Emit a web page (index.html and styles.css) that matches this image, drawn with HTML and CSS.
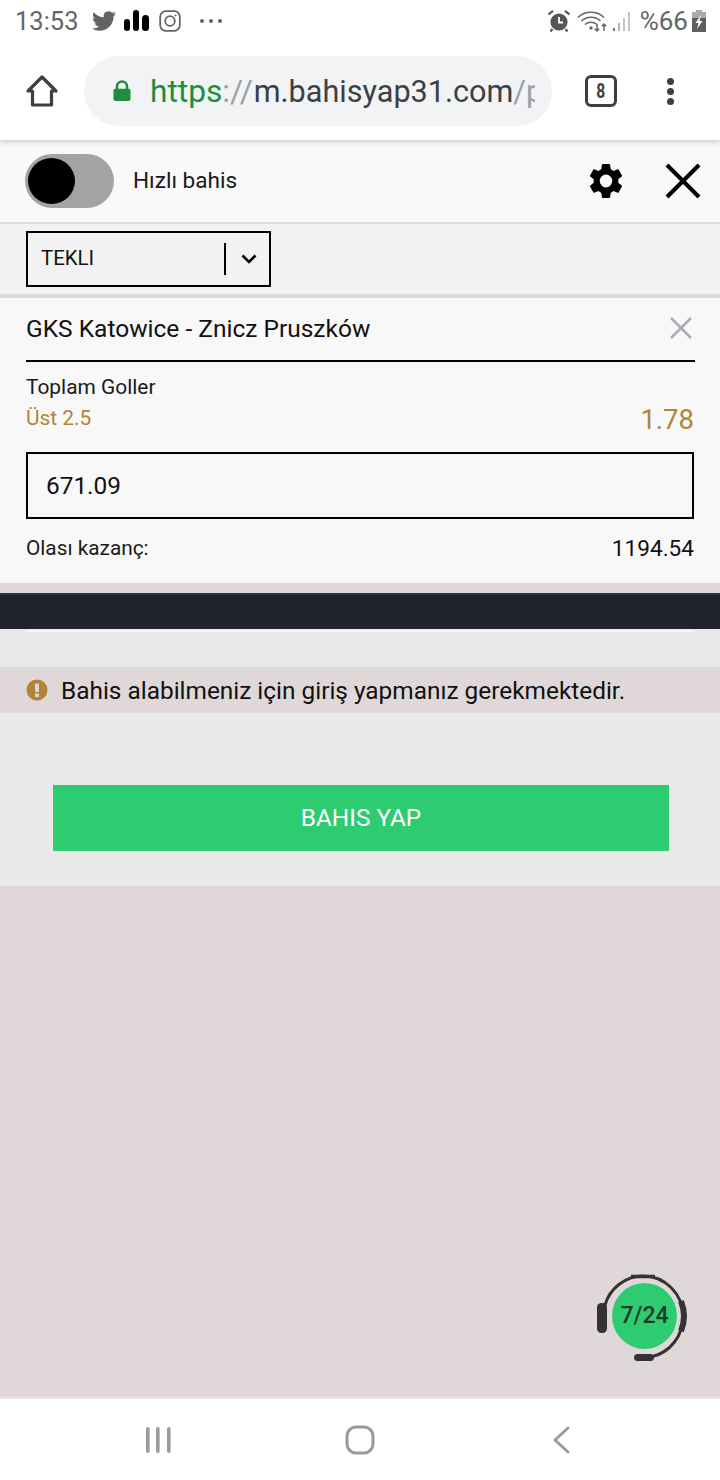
FILE: index.html
```html
<!DOCTYPE html>
<html lang="tr">
<head>
    <meta charset="UTF-8">
    <meta name="viewport" content="width=device-width, initial-scale=1.0">
    <title>Bahis</title>
    <link rel="stylesheet" href="styles.css">
</head>
<body>

<!-- Phone status bar -->
<div class="status-bar">
    <div class="status-left">
        <span class="clock">13:53</span>
        <svg class="ic-twitter" width="24" height="24" viewBox="0 0 24 24"><path fill="#636363" d="M23.95 4.57a10 10 0 0 1-2.82.77 4.96 4.96 0 0 0 2.16-2.72c-.95.56-2 .96-3.13 1.19a4.92 4.92 0 0 0-8.38 4.48C7.69 8.1 4.07 6.13 1.64 3.16a4.82 4.82 0 0 0-.67 2.48c0 1.71.87 3.21 2.19 4.1a4.9 4.9 0 0 1-2.23-.62v.06a4.92 4.92 0 0 0 3.95 4.83 5 5 0 0 1-2.21.08 4.94 4.94 0 0 0 4.6 3.42A9.87 9.87 0 0 1 0 19.54a13.99 13.99 0 0 0 7.56 2.21c9.05 0 14-7.5 14-13.98 0-.21 0-.42-.02-.63a9.94 9.94 0 0 0 2.41-2.57z"/></svg>
        <svg class="ic-bars" width="26" height="22" viewBox="0 0 26 22"><rect x="0" y="9" width="6" height="12" rx="3"/><rect x="9" y="0" width="6" height="21" rx="3"/><rect x="18" y="5" width="7" height="16" rx="3.5"/></svg>
        <svg class="ic-insta" width="22" height="22" viewBox="0 0 22 22" fill="none" stroke="#636363" stroke-width="1.8"><rect x="1.2" y="1.2" width="19.6" height="19.6" rx="5.5"/><circle cx="11" cy="11" r="4.8"/><circle cx="16.6" cy="5.4" r="1" fill="#636363" stroke="none"/></svg>
        <span class="dots-h"><i></i><i></i><i></i></span>
    </div>
    <div class="status-right">
        <svg class="ic-alarm" width="24" height="24" viewBox="0 0 24 24"><circle cx="12" cy="13" r="8.6" fill="#555"/><path d="M12 8v5.5h4" fill="none" stroke="#fff" stroke-width="1.8"/><path d="M1.5 5.5 6 1.8M22.5 5.5 18 1.8M5.5 20l-2 2.5M18.5 20l2 2.5" stroke="#555" stroke-width="2.2" fill="none"/></svg>
        <svg width="32" height="24" viewBox="0 0 32 24" fill="none" stroke="#666" stroke-width="1.6"><path d="M1 8.5C8 1.5 20 1.5 27 8.5M4.5 12C9.5 7 18.5 7 23.5 12M8 15.5c3.300-3 8.700-3 12 0"/><circle cx="14" cy="19" r="1.700" fill="#666" stroke="none"/><path d="M20 15v7M17.800 19.800 20 22l2.200-2.200M27 22v-7M24.800 17.200 27 15l2.200 2.200" stroke-width="1.500"/></svg>
        <svg width="20" height="22" viewBox="0 0 20 22"><rect x="0" y="18" width="2" height="3" fill="#777"/><rect x="5" y="13" width="2" height="8" fill="#b5b5b5"/><rect x="10" y="8" width="2" height="13" fill="#c4c4c4"/><rect x="15" y="2" width="2" height="19" fill="#c4c4c4"/></svg>
        <span class="percent">%66</span>
        <svg width="14" height="22" viewBox="0 0 14 22"><rect x="4" y="0" width="6" height="3" fill="#aaa"/><rect x="0" y="2" width="14" height="7" fill="#aaa"/><rect x="0" y="8" width="14" height="14" fill="#5f5f5f"/><path d="M9 5 3.500 13h3l-1.500 6 5.500-8H7.500z" fill="#fff"/></svg>
    </div>
</div>

<!-- Browser toolbar -->
<div class="toolbar">
    <svg class="ic-home" width="34" height="34" viewBox="0 0 34 34" fill="none" stroke="#3c4043" stroke-width="3.2" stroke-linejoin="round"><path d="M3 17 17 3l14 14h-4.500v14h-19V17z"/></svg>
    <div class="url-box">
        <svg class="ic-lock" width="18" height="22" viewBox="0 0 20 24"><path fill="#1e8e3e" d="M3 9.500V7a7 7 0 0 1 14 0v2.500h.5a2 2 0 0 1 2 2V21a2 2 0 0 1-2 2h-15a2 2 0 0 1-2-2v-9.500a2 2 0 0 1 2-2zM5.800 9.500h8.400V7a4.200 4.200 0 0 0-8.400 0z"/></svg>
        <div class="url-text"><span class="u-green">https</span><span class="u-grey u-slash">://</span>m.bahisyap31.com<span class="u-grey">/p</span></div>
    </div>
    <div class="tab-count"><span>8</span></div>
    <span class="dots-v"><i></i><i></i><i></i></span>
</div>

<!-- Bet slip head -->
<div class="slip-head">
    <div class="toggle"><div class="knob"></div></div>
    <span class="toggle-label">Hızlı bahis</span>
    <svg class="ic-gear" width="32" height="34" viewBox="2.3 2 19.4 20" preserveAspectRatio="none"><path fill-rule="evenodd" d="M19.430 12.980c.04-.32.07-.64.07-.98s-.03-.66-.07-.98l2.110-1.650c.19-.15.24-.42.12-.64l-2-3.460c-.12-.22-.39-.3-.61-.22l-2.490 1c-.52-.4-1.080-.73-1.690-.98l-.38-2.650A.49.49 0 0 0 14 2h-4c-.25 0-.46.18-.49.42l-.38 2.650c-.61.25-1.170.59-1.690.98l-2.490-1c-.23-.09-.49 0-.61.22l-2 3.460c-.13.22-.07.49.12.64l2.110 1.650c-.04.32-.07.65-.07.98s.03.66.07.98l-2.110 1.650c-.19.15-.24.42-.12.64l2 3.460c.12.22.39.3.61.22l2.490-1c.52.4 1.080.73 1.690.98l.38 2.650c.03.24.24.42.49.42h4c.25 0 .46-.18.49-.42l.38-2.650c.61-.25 1.170-.59 1.690-.98l2.490 1c.23.09.49 0 .61-.22l2-3.460c.12-.22.07-.49-.12-.64zM12 15.800a3.800 3.800 0 1 1 0-7.600 3.800 3.800 0 0 1 0 7.600z"/></svg>
    <svg class="ic-close" width="36" height="36" viewBox="0 0 36 36" stroke="#000" stroke-width="4"><path d="M2 2l32 32M34 2 2 34"/></svg>
</div>

<!-- Bet type select -->
<div class="type-row">
    <div class="type-select">
        <span class="type-name">TEKLI</span>
        <span class="type-sep"></span>
        <svg class="ic-chev" width="16" height="10" viewBox="0 0 16 10" fill="none" stroke="#000" stroke-width="2.600"><path d="M1.500 1.500 8 8l6.500-6.500"/></svg>
    </div>
</div>

<!-- Selected bet -->
<div class="bet-card">
    <div class="bet-title">
        <span>GKS Katowice - Znicz Pruszków</span>
        <svg width="22" height="22" viewBox="0 0 22 22" stroke="#a9adb3" stroke-width="2.600"><path d="M1 1l20 20M21 1 1 21"/></svg>
    </div>
    <div class="market">Toplam Goller</div>
    <div class="pick-row">
        <span class="pick">Üst 2.5</span>
        <span class="odds">1.78</span>
    </div>
    <input class="stake" type="text" value="671.09">
    <div class="win-row">
        <span class="win-label">Olası kazanç:</span>
        <span class="win-value">1194.54</span>
    </div>
</div>

<div class="gap-band"></div>
<div class="dark-band"></div>

<div class="summary">
    <div class="summary-line"></div>
    <div class="warning">
        <svg width="22" height="22" viewBox="0 0 22 22"><circle cx="11" cy="11" r="10.500" fill="#b08538"/><rect x="9" y="4.500" width="4" height="8.500" rx="1" fill="#e0d8d8"/><rect x="9" y="14.500" width="4" height="3.500" fill="#e0d8d8"/></svg>
        <span>Bahis alabilmeniz için giriş yapmanız gerekmektedir.</span>
    </div>
    <div class="btn-wrap">
        <button class="bet-btn">BAHIS YAP</button>
    </div>
</div>

<div class="filler">
    <!-- Floating support button -->
    <div class="support">
        <svg width="96" height="92" viewBox="0 0 96 92" fill="none" stroke="#333"><path d="M10 32A40 40 0 0 1 48 3 40 40 0 0 1 88 43 41 41 0 0 1 56 84" stroke-width="3"/><path d="M36 3.500h24" stroke-width="3.500"/><path d="M86 28a40 40 0 0 1 0 30" stroke-width="6"/><rect x="2" y="30" width="10" height="30" rx="4.500" fill="#333" stroke="none"/><rect x="39" y="81" width="20" height="7" rx="3.500" fill="#333" stroke="none"/></svg>
        <div class="support-badge">7/24</div>
    </div>
</div>

<!-- Android nav bar -->
<div class="nav-bar">
    <svg width="28" height="26" viewBox="0 0 28 26" fill="#9a9a9a"><rect x="1" y="0" width="3.600" height="26" rx="1.800"/><rect x="11" y="0" width="3.600" height="26" rx="1.800"/><rect x="22" y="0" width="3.600" height="26" rx="1.800"/></svg>
    <svg width="30" height="30" viewBox="0 0 30 30" fill="none" stroke="#9a9a9a" stroke-width="3"><rect x="2" y="2" width="26" height="26" rx="9"/></svg>
    <svg width="18" height="28" viewBox="0 0 18 28" fill="none" stroke="#9a9a9a" stroke-width="3" stroke-linecap="round" stroke-linejoin="round"><path d="M16 2 3 14l13 12"/></svg>
</div>

</body>
</html>
```

FILE: styles.css
```css
* {
    box-sizing: border-box;
}
body {
    font-family: 'Roboto', sans-serif;
    background-color: #e0d8d8;
    margin: 0;
    padding: 0;
    width: 720px;
    height: 1480px;
    display: flex;
    flex-direction: column;
    overflow: hidden;
    color: #111;
}
.status-bar {
    height: 40px;
    background-color: #fff;
    display: flex;
    justify-content: space-between;
    align-items: center;
    padding: 2px 14px 0 15px;
    flex-shrink: 0;
    position: relative;
    z-index: 2;
}
.status-left, .status-right {
    display: flex;
    align-items: center;
}
.clock {
    font-size: 25.5px;
    color: #666;
    margin-right: 13px;
}
.ic-bars {
    margin-left: 8px;
}
.ic-insta {
    margin-left: 9px;
}
.dots-h {
    display: flex;
    gap: 5px;
    margin-left: 19px;
}
.dots-h i {
    width: 4px;
    height: 4px;
    border-radius: 50%;
    background-color: #666;
}
.status-right {
    gap: 4px;
}
.ic-alarm {
    margin-right: 2px;
}
.percent {
    font-size: 26px;
    color: #666;
    margin-left: 3px;
}
.toolbar {
    height: 100px;
    background-color: #fff;
    display: flex;
    align-items: center;
    padding: 2px 0 0 25px;
    flex-shrink: 0;
    position: relative;
    z-index: 1;
    box-shadow: 0 2px 5px rgba(0, 0, 0, 0.18);
}
.url-box {
    width: 468px;
    height: 70px;
    margin-left: 25px;
    background-color: #f1f3f4;
    border-radius: 35px;
    display: flex;
    align-items: center;
    padding-left: 29px;
    overflow: hidden;
}
.ic-lock {
    flex-shrink: 0;
}
.url-text {
    font-size: 30.6px;
    margin-left: 19px;
    color: #3c4043;
    width: 385px;
    overflow: hidden;
    white-space: nowrap;
}
.u-green {
    color: #1e8e3e;
    font-size: 31.7px;
}
.u-grey {
    color: #9aa0a6;
}
.u-slash {
    font-size: 31.7px;
    margin-right: 1px;
}
.tab-count {
    width: 32px;
    height: 32px;
    margin-left: 33px;
    border: 3px solid #3c4043;
    border-radius: 6px;
    font-size: 20px;
    font-weight: bold;
    color: #3c4043;
    text-align: center;
    line-height: 26px;
}
.tab-count span {
    display: inline-block;
    transform: scaleX(0.78);
}
.dots-v {
    display: flex;
    flex-direction: column;
    gap: 3px;
    margin-left: 50px;
}
.dots-v i {
    width: 7px;
    height: 7px;
    border-radius: 50%;
    background-color: #3c4043;
}
.slip-head {
    height: 84px;
    background-color: #f9f9f9;
    border-bottom: 2px solid #e0d8d8;
    display: flex;
    align-items: center;
    padding-left: 25px;
    flex-shrink: 0;
}
.toggle {
    width: 89px;
    height: 54px;
    border-radius: 27px;
    background-color: #a3a3a3;
    padding: 4px 3px;
}
.knob {
    width: 47px;
    height: 46px;
    border-radius: 50%;
    background-color: #000;
}
.toggle-label {
    font-size: 22.6px;
    margin-left: 19px;
    padding-bottom: 2px;
    color: #1a1a1a;
}
.ic-gear {
    margin-left: auto;
}
.ic-close {
    margin-left: 43px;
    margin-right: 19px;
}
.type-row {
    height: 74px;
    background-color: #f2f2f2;
    border-bottom: 4px solid #e0d8d8;
    padding: 7px 0 0 26px;
    flex-shrink: 0;
}
.type-select {
    width: 245px;
    height: 56px;
    border: 2px solid #000;
    display: flex;
    align-items: center;
    padding: 0 0 1px 13px;
}
.type-name {
    font-size: 20.4px;
    padding-bottom: 2px;
    color: #111;
}
.type-sep {
    width: 2px;
    height: 32px;
    background-color: #000;
    margin-left: auto;
}
.ic-chev {
    margin: 0 12px 0 15px;
}
.bet-card {
    height: 285px;
    background-color: #f8f8f8;
    padding: 0 25px 0 26px;
    flex-shrink: 0;
}
.bet-title {
    height: 64px;
    border-bottom: 2px solid #000;
    display: flex;
    justify-content: space-between;
    align-items: center;
    font-size: 24.5px;
    padding: 0 3px 2px 0;
}
.market {
    font-size: 20.9px;
    margin-top: 13px;
    color: #1a1a1a;
}
.pick-row {
    display: flex;
    justify-content: space-between;
    align-items: flex-end;
    height: 30px;
    margin: 2px 1px 0 0;
}
.pick {
    font-size: 20.9px;
    color: #b08538;
    margin-bottom: 1px;
}
.odds {
    font-size: 27.5px;
    color: #b08538;
    margin-bottom: -5px;
}
.stake {
    display: block;
    width: 668px;
    height: 67px;
    margin-top: 21px;
    border: 2px solid #000;
    background-color: #f8f8f8;
    font-family: 'Roboto', sans-serif;
    font-size: 24.4px;
    color: #111;
    padding: 0 18px;
    outline: none;
}
.win-row {
    display: flex;
    justify-content: space-between;
    align-items: flex-end;
    margin: 16px 1px 0 0;
}
.win-label {
    font-size: 20.8px;
    color: #1a1a1a;
    margin-bottom: 2px;
}
.win-value {
    font-size: 22.6px;
    color: #111;
}
.gap-band {
    height: 10px;
    background-color: #e0d8d8;
    flex-shrink: 0;
}
.dark-band {
    height: 36px;
    background-color: #20242f;
    border-top: 2px solid #2d3140;
    flex-shrink: 0;
}
.summary {
    height: 257px;
    background-color: #e9e9e9;
    flex-shrink: 0;
}
.summary-line {
    height: 2px;
    margin: 1px 26px 0;
    background-color: #f5f5f5;
}
.warning {
    height: 46px;
    margin-top: 35px;
    background-color: #e0d8d8;
    display: flex;
    align-items: center;
    padding-left: 26px;
    font-size: 24.4px;
    color: #111;
}
.warning span {
    margin-left: 13px;
}
.btn-wrap {
    padding: 72px 51px 0 53px;
}
.bet-btn {
    display: block;
    width: 100%;
    height: 66px;
    padding: 0 0 2px;
    background-color: #2ecc71;
    color: #fff;
    border: none;
    font-family: 'Roboto', sans-serif;
    font-size: 24.4px;
}
.filler {
    flex: 1;
    background-color: #e0d8d8;
    position: relative;
}
.support {
    position: absolute;
    left: 595px;
    top: 387px;
    width: 96px;
    height: 92px;
}
.support-badge {
    position: absolute;
    left: 17px;
    top: 10px;
    width: 65px;
    height: 66px;
    border-radius: 50%;
    background-color: #2ecc71;
    color: #1f3a2a;
    font-size: 23px;
    font-weight: 500;
    text-align: center;
    line-height: 66px;
}
.nav-bar {
    height: 83px;
    background-color: #fff;
    border-top: 2px solid #e9e4e4;
    display: flex;
    align-items: center;
    flex-shrink: 0;
    padding: 1px 0 0 145px;
    gap: 0;
}
.nav-bar svg:nth-child(2) {
    margin-left: 172px;
}
.nav-bar svg:nth-child(3) {
    margin-left: 177px;
}
```
